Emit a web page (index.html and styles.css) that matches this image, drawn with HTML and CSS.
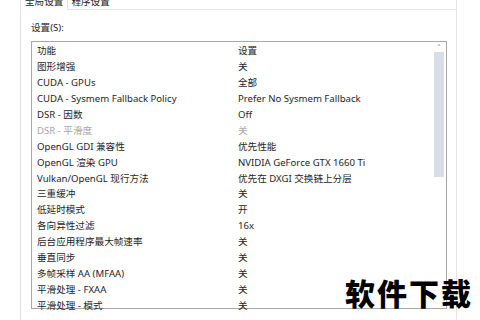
FILE: index.html
```html
<!DOCTYPE html>
<html>
<head>
<meta charset="utf-8"/>
<link rel="stylesheet" href="styles.css">
<title>NVIDIA 控制面板 - 管理 3D 设置</title>
</head>
<body>
<div class="Window">
  <div class="Tabs">
    <div class="Tab Active">全局设置</div>
    <div class="Tab">程序设置</div>
    <div class="TabFill"></div>
  </div>
  <div class="Panel">
    <div class="Label">设置(S):</div>
    <div class="ListBox">
      <div class="Rows">
        <div class="Row Head"><span class="Feature">功能</span><span>设置</span></div>
        <div class="Row"><span class="Feature">图形增强</span><span>关</span></div>
        <div class="Row"><span class="Feature">CUDA - GPUs</span><span>全部</span></div>
        <div class="Row"><span class="Feature">CUDA - Sysmem Fallback Policy</span><span>Prefer No Sysmem Fallback</span></div>
        <div class="Row"><span class="Feature">DSR - 因数</span><span>Off</span></div>
        <div class="Row Disabled"><span class="Feature">DSR - 平滑度</span><span>关</span></div>
        <div class="Row"><span class="Feature">OpenGL GDI 兼容性</span><span>优先性能</span></div>
        <div class="Row"><span class="Feature">OpenGL 渲染 GPU</span><span>NVIDIA GeForce GTX 1660 Ti</span></div>
        <div class="Row"><span class="Feature">Vulkan/OpenGL 现行方法</span><span>优先在 DXGI 交换链上分层</span></div>
        <div class="Row"><span class="Feature">三重缓冲</span><span>关</span></div>
        <div class="Row"><span class="Feature">低延时模式</span><span>开</span></div>
        <div class="Row"><span class="Feature">各向异性过滤</span><span>16x</span></div>
        <div class="Row"><span class="Feature">后台应用程序最大帧速率</span><span>关</span></div>
        <div class="Row"><span class="Feature">垂直同步</span><span>关</span></div>
        <div class="Row"><span class="Feature">多帧采样 AA (MFAA)</span><span>关</span></div>
        <div class="Row"><span class="Feature">平滑处理 - FXAA</span><span>关</span></div>
        <div class="Row"><span class="Feature">平滑处理 - 模式</span><span>关</span></div>
      </div>
      <div class="ScrollBar">
        <div class="Arrow">&#x2C4;</div>
        <div class="Thumb"></div>
      </div>
    </div>
  </div>
  <div class="Watermark">软件下载</div>
</div>
</body>
</html>
```
FILE: styles.css
```css
body {
  margin: 0;
  background-color: #ffffff;
  font-family: "Noto Sans", "Noto Sans CJK SC", sans-serif;
  font-size: 9.6px;
  color: #1e1e1e;
  overflow: hidden;
}

.Window {
  position: relative;
  width: 480px;
  height: 320px;
  overflow: hidden;
}

.Tabs {
  display: flex;
  margin-left: 20px;
  width: 437px;
  height: 10px;
}

.Tab {
  padding: 0 4px;
  line-height: 10px;
  margin-top: -3px;
  height: 13px;
  box-sizing: border-box;
}

.Tab.Active {
  border-left: 1px solid #e4e4e4;
  border-right: 1px solid #e4e4e4;
}

.Tabs .Tab:not(.Active) {
  border-bottom: 1px solid #e4e4e4;
  padding-left: 3px;
}

.TabFill {
  flex: 1;
  border-bottom: 1px solid #e4e4e4;
  border-right: 1px solid #e4e4e4;
}

.Panel {
  margin-left: 20px;
  width: 437px;
  height: 320px;
  box-sizing: border-box;
  border-left: 1px solid #e4e4e4;
  border-right: 1px solid #e4e4e4;
  padding: 12px 0 0 10px;
}

.Label {
  line-height: 12px;
  height: 19px;
}

.ListBox {
  display: flex;
  width: 416px;
  height: 268px;
  box-sizing: border-box;
  border: 1px solid #a8a8a8;
}

.Rows {
  flex: 1;
  padding-top: 1px;
}

.Row {
  display: flex;
  height: 15.94px;
  line-height: 15.94px;
  padding-left: 5px;
  white-space: nowrap;
}

.Feature {
  width: 201px;
}

.Row.Disabled {
  color: #a6a6a6;
}

.ScrollBar {
  width: 12px;
  display: flex;
  flex-direction: column;
  align-items: center;
  margin-right: 1px;
}

.Arrow {
  font-size: 9px;
  line-height: 8px;
  height: 8px;
  margin-top: 2px;
  color: #555555;
}

.Thumb {
  width: 10px;
  height: 125px;
  background-color: #d9dee6;
}

.Watermark {
  position: absolute;
  left: 345px;
  top: 274px;
  font-family: "Noto Sans CJK SC", sans-serif;
  font-size: 30px;
  font-weight: 900;
  line-height: 36px;
  letter-spacing: 2px;
  color: #000000;
}
```
